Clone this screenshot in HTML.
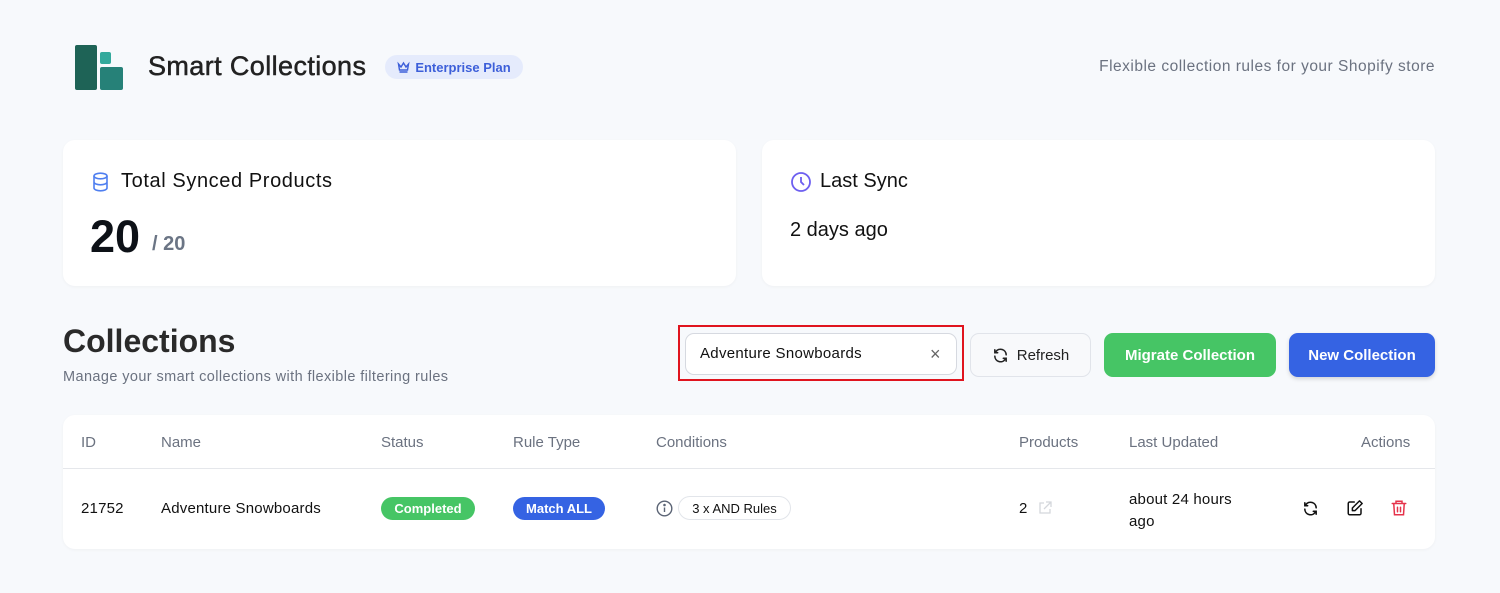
<!DOCTYPE html><html><head><style>
*{box-sizing:border-box;margin:0;padding:0}
body{width:1500px;height:593px;background:#f7f9fc;font-family:"Liberation Sans",Arial,sans-serif;color:#1f2328;position:relative;overflow:hidden}
.a{position:absolute}
.card{position:absolute;background:#fff;border-radius:12px;box-shadow:0 1px 3px rgba(0,0,0,.04)}
.btn{position:absolute;height:44px;border-radius:9px;display:flex;align-items:center;justify-content:center;font-size:15px;font-weight:bold}
.hd{position:absolute;top:434px;font-size:15px;color:#6b7280}
.c{position:absolute;font-size:15px;color:#111;letter-spacing:.2px}
</style></head><body>
<svg class="a" style="left:74px;top:44px" width="50" height="47"><rect x="1" y="1" width="22" height="45" rx="2" fill="#1e6356"/><rect x="26" y="8" width="11" height="12" rx="2" fill="#33a99c"/><rect x="26" y="23" width="23" height="23" rx="2" fill="#268178"/></svg>
<div class="a" style="left:148px;top:51px;font-size:27px;color:#222;letter-spacing:.4px;-webkit-text-stroke:.5px #222">Smart Collections</div>
<div class="a" style="left:385px;top:55px;width:138px;height:24px;border-radius:12px;background:#e5ebfc;color:#3d5fd9;font-size:13px;font-weight:bold;display:flex;align-items:center;justify-content:center;gap:5px"><svg width="13" height="12" viewBox="0 0 13 12" fill="none" stroke="#3d5fd9" stroke-width="1.4"><path d="M1.5 3l2.5 3 2.5-4 2.5 4 2.5-3-1 6h-8z M2.5 11h8"/></svg>Enterprise Plan</div>
<div class="a" style="right:65px;top:58px;font-size:15.5px;color:#6b7280;letter-spacing:.5px">Flexible collection rules for your Shopify store</div>

<div class="card" style="left:63px;top:140px;width:673px;height:146px"></div>
<svg class="a" style="left:92px;top:172px" width="17" height="20" viewBox="0 0 17 20" fill="none" stroke="#4f7ff0" stroke-width="1.6"><ellipse cx="8.5" cy="4" rx="6.5" ry="2.8"/><path d="M2 4v12c0 1.6 3 2.8 6.5 2.8S15 17.6 15 16V4M2 10c0 1.6 3 2.8 6.5 2.8S15 11.6 15 10"/></svg>
<div class="a" style="left:121px;top:170px;font-size:20px;color:#111;letter-spacing:.6px">Total Synced Products</div>
<div class="a" style="left:90px;top:211px;font-size:45px;font-weight:bold;color:#0d1117">20</div>
<div class="a" style="left:152px;top:233px;font-size:20px;font-weight:bold;color:#6b7585">/ 20</div>
<div class="card" style="left:762px;top:140px;width:673px;height:146px"></div>
<svg class="a" style="left:790px;top:171px" width="22" height="22" viewBox="0 0 22 22" fill="none" stroke="#6d5ff0" stroke-width="1.8"><circle cx="11" cy="11" r="9"/><path d="M11 6v5l3 3"/></svg>
<div class="a" style="left:820px;top:170px;font-size:20px;color:#111">Last Sync</div>
<div class="a" style="left:790px;top:219px;font-size:20px;color:#111">2 days ago</div>

<div class="a" style="left:63px;top:323px;font-size:32px;font-weight:bold;color:#2a2a2a">Collections</div>
<div class="a" style="left:63px;top:369px;font-size:14.5px;color:#6b7280;letter-spacing:.4px">Manage your smart collections with flexible filtering rules</div>
<div class="a" style="left:678px;top:325px;width:286px;height:56px;border:2px solid #e0141e"></div>
<div class="a" style="left:685px;top:333px;width:272px;height:42px;border:1px solid #d6d9e0;border-radius:9px;background:#fff"></div>
<div class="a" style="left:700px;top:345px;font-size:15px;color:#111;letter-spacing:.3px">Adventure Snowboards</div>
<div class="a" style="left:930px;top:344px;font-size:18px;color:#666">×</div>
<div class="btn" style="left:970px;top:333px;width:121px;border:1px solid #e1e4ea;background:#f8f9fb;color:#222;font-weight:normal;gap:8px"><svg width="17" height="17" viewBox="0 0 24 24" fill="none" stroke="#222" stroke-width="2.2" stroke-linecap="round"><path d="M20 11a8 8 0 0 0-14.5-4.5M4 4v4h4M4 13a8 8 0 0 0 14.5 4.5M20 20v-4h-4"/></svg>Refresh</div>
<div class="btn" style="left:1104px;top:333px;width:172px;background:#46c565;color:#fff">Migrate Collection</div>
<div class="btn" style="left:1289px;top:333px;width:146px;background:#3563e3;color:#fff;box-shadow:0 2px 4px rgba(0,0,0,.15)">New Collection</div>

<div class="card" style="left:63px;top:415px;width:1372px;height:134px"></div>
<div class="a" style="left:63px;top:468px;width:1372px;height:1px;background:#e5e7eb"></div>
<div class="hd" style="left:81px">ID</div>
<div class="hd" style="left:161px">Name</div>
<div class="hd" style="left:381px">Status</div>
<div class="hd" style="left:513px">Rule Type</div>
<div class="hd" style="left:656px">Conditions</div>
<div class="hd" style="left:1019px">Products</div>
<div class="hd" style="left:1129px">Last Updated</div>
<div class="hd" style="left:1361px">Actions</div>
<div class="c" style="left:81px;top:500px">21752</div>
<div class="c" style="left:161px;top:500px">Adventure Snowboards</div>
<div class="a" style="left:381px;top:497px;width:94px;height:23px;border-radius:12px;background:#46c565;color:#fff;font-size:13px;font-weight:bold;display:flex;align-items:center;justify-content:center">Completed</div>
<div class="a" style="left:513px;top:497px;width:92px;height:23px;border-radius:12px;background:#3563e3;color:#fff;font-size:13px;font-weight:bold;display:flex;align-items:center;justify-content:center">Match ALL</div>
<svg class="a" style="left:656px;top:500px" width="17" height="17" viewBox="0 0 17 17" fill="none" stroke="#5b6475" stroke-width="1.4"><circle cx="8.5" cy="8.5" r="7.3"/><path d="M8.5 7.5v4.5"/><circle cx="8.5" cy="5" r=".6" fill="#5b6475"/></svg>
<div class="a" style="left:678px;top:496px;width:113px;height:24px;border-radius:12px;border:1px solid #e2e5ea;font-size:13px;color:#111;display:flex;align-items:center;justify-content:center">3 x AND Rules</div>
<div class="c" style="left:1019px;top:500px">2</div>
<svg class="a" style="left:1038px;top:501px" width="14" height="14" viewBox="0 0 14 14" fill="none" stroke="#d4d7dc" stroke-width="1.3"><path d="M6 2H2v10h10V8M8 1h5v5M13 1L6 8"/></svg>
<div class="c" style="left:1129px;top:489px;line-height:22px">about 24 hours<br>ago</div>
<svg class="a" style="left:1302px;top:500px" width="17" height="17" viewBox="0 0 24 24" fill="none" stroke="#111" stroke-width="2.2" stroke-linecap="round"><path d="M20 11a8 8 0 0 0-14.5-4.5M4 4v4h4M4 13a8 8 0 0 0 14.5 4.5M20 20v-4h-4"/></svg>
<svg class="a" style="left:1346px;top:499px" width="18" height="18" viewBox="0 0 24 24" fill="none" stroke="#111" stroke-width="2" stroke-linecap="round" stroke-linejoin="round"><path d="M11 4H5a2 2 0 0 0-2 2v13a2 2 0 0 0 2 2h13a2 2 0 0 0 2-2v-6"/><path d="M18 2.5l3.5 3.5L12 15.5H8.5V12z"/></svg>
<svg class="a" style="left:1390px;top:499px" width="18" height="18" viewBox="0 0 24 24" fill="none" stroke="#e5334b" stroke-width="2" stroke-linecap="round"><path d="M3 6h18M8 6V3h8v3M5 6l1 15h12l1-15M10 11v6M14 11v6"/></svg>
</body></html>
